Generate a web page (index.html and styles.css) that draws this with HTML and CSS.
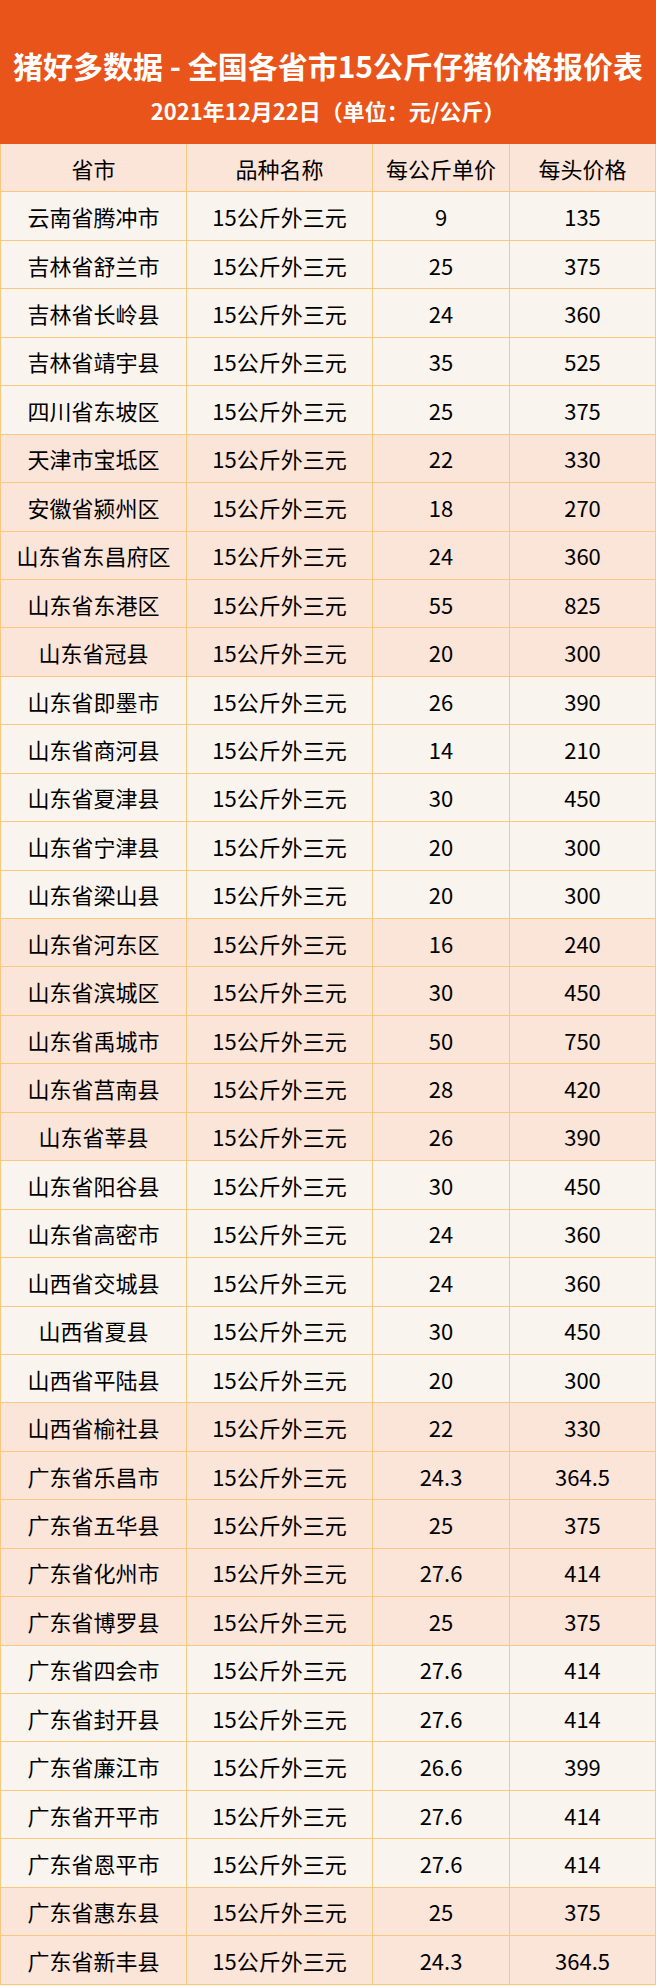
FILE: index.html
```html
<!DOCTYPE html>
<html lang="zh-CN">
<head>
<meta charset="utf-8">
<title>猪好多数据</title>
<link rel="stylesheet" href="styles.css">
</head>
<body>
<div class="page">
  <header class="banner">
    <h1 class="title">猪好多数据 - 全国各省市15公斤仔猪价格报价表</h1>
    <p class="date">2021年12月22日（单位：元/公斤）</p>
  </header>
  <div class="table">
    <div class="row peach head"><div>省市</div><div>品种名称</div><div>每公斤单价</div><div>每头价格</div></div>
    <div class="row cream"><div>云南省腾冲市</div><div>15公斤外三元</div><div>9</div><div>135</div></div>
    <div class="row cream"><div>吉林省舒兰市</div><div>15公斤外三元</div><div>25</div><div>375</div></div>
    <div class="row cream"><div>吉林省长岭县</div><div>15公斤外三元</div><div>24</div><div>360</div></div>
    <div class="row cream"><div>吉林省靖宇县</div><div>15公斤外三元</div><div>35</div><div>525</div></div>
    <div class="row cream"><div>四川省东坡区</div><div>15公斤外三元</div><div>25</div><div>375</div></div>
    <div class="row peach"><div>天津市宝坻区</div><div>15公斤外三元</div><div>22</div><div>330</div></div>
    <div class="row peach"><div>安徽省颍州区</div><div>15公斤外三元</div><div>18</div><div>270</div></div>
    <div class="row peach"><div>山东省东昌府区</div><div>15公斤外三元</div><div>24</div><div>360</div></div>
    <div class="row peach"><div>山东省东港区</div><div>15公斤外三元</div><div>55</div><div>825</div></div>
    <div class="row peach"><div>山东省冠县</div><div>15公斤外三元</div><div>20</div><div>300</div></div>
    <div class="row cream"><div>山东省即墨市</div><div>15公斤外三元</div><div>26</div><div>390</div></div>
    <div class="row cream"><div>山东省商河县</div><div>15公斤外三元</div><div>14</div><div>210</div></div>
    <div class="row cream"><div>山东省夏津县</div><div>15公斤外三元</div><div>30</div><div>450</div></div>
    <div class="row cream"><div>山东省宁津县</div><div>15公斤外三元</div><div>20</div><div>300</div></div>
    <div class="row cream"><div>山东省梁山县</div><div>15公斤外三元</div><div>20</div><div>300</div></div>
    <div class="row peach"><div>山东省河东区</div><div>15公斤外三元</div><div>16</div><div>240</div></div>
    <div class="row peach"><div>山东省滨城区</div><div>15公斤外三元</div><div>30</div><div>450</div></div>
    <div class="row peach"><div>山东省禹城市</div><div>15公斤外三元</div><div>50</div><div>750</div></div>
    <div class="row peach"><div>山东省莒南县</div><div>15公斤外三元</div><div>28</div><div>420</div></div>
    <div class="row peach"><div>山东省莘县</div><div>15公斤外三元</div><div>26</div><div>390</div></div>
    <div class="row cream"><div>山东省阳谷县</div><div>15公斤外三元</div><div>30</div><div>450</div></div>
    <div class="row cream"><div>山东省高密市</div><div>15公斤外三元</div><div>24</div><div>360</div></div>
    <div class="row cream"><div>山西省交城县</div><div>15公斤外三元</div><div>24</div><div>360</div></div>
    <div class="row cream"><div>山西省夏县</div><div>15公斤外三元</div><div>30</div><div>450</div></div>
    <div class="row cream"><div>山西省平陆县</div><div>15公斤外三元</div><div>20</div><div>300</div></div>
    <div class="row peach"><div>山西省榆社县</div><div>15公斤外三元</div><div>22</div><div>330</div></div>
    <div class="row peach"><div>广东省乐昌市</div><div>15公斤外三元</div><div>24.3</div><div>364.5</div></div>
    <div class="row peach"><div>广东省五华县</div><div>15公斤外三元</div><div>25</div><div>375</div></div>
    <div class="row peach"><div>广东省化州市</div><div>15公斤外三元</div><div>27.6</div><div>414</div></div>
    <div class="row peach"><div>广东省博罗县</div><div>15公斤外三元</div><div>25</div><div>375</div></div>
    <div class="row cream"><div>广东省四会市</div><div>15公斤外三元</div><div>27.6</div><div>414</div></div>
    <div class="row cream"><div>广东省封开县</div><div>15公斤外三元</div><div>27.6</div><div>414</div></div>
    <div class="row cream"><div>广东省廉江市</div><div>15公斤外三元</div><div>26.6</div><div>399</div></div>
    <div class="row cream"><div>广东省开平市</div><div>15公斤外三元</div><div>27.6</div><div>414</div></div>
    <div class="row cream"><div>广东省恩平市</div><div>15公斤外三元</div><div>27.6</div><div>414</div></div>
    <div class="row peach"><div>广东省惠东县</div><div>15公斤外三元</div><div>25</div><div>375</div></div>
    <div class="row peach"><div>广东省新丰县</div><div>15公斤外三元</div><div>24.3</div><div>364.5</div></div>
  </div>
</div>
</body>
</html>
```
FILE: styles.css
```css
* { box-sizing: border-box; }
html, body { margin: 0; padding: 0; }
body {
  width: 656px;
  font-family: "Noto Sans CJK SC", "Noto Sans", sans-serif;
  color: #000;
  background: #faf4ef;
}
.banner {
  height: 144px;
  background: #e9541a;
  color: #fff;
  display: flex;
  flex-direction: column;
  align-items: center;
  padding-top: 44px;
}
.title {
  margin: 0;
  font-size: 30px;
  font-weight: 700;
  line-height: 42px;
  white-space: nowrap;
}
.date {
  margin: 9px 0 0;
  font-size: 22px;
  font-weight: 700;
  line-height: 30px;
  white-space: nowrap;
}
.table {
  border-left: 1px solid #f8c97c;
}
.row {
  display: grid;
  grid-template-columns: 186px 186px 137px 146px;
  height: 48.45px;
}
.row > div {
  display: flex;
  align-items: center;
  justify-content: center;
  border-right: 1px solid #f8c97c;
  border-bottom: 1px solid #f8c97c;
  font-size: 22px;
  line-height: 1;
  white-space: nowrap;
}
.peach { background: #fbe4d8; }
.cream { background: #faf4ef; }
```
